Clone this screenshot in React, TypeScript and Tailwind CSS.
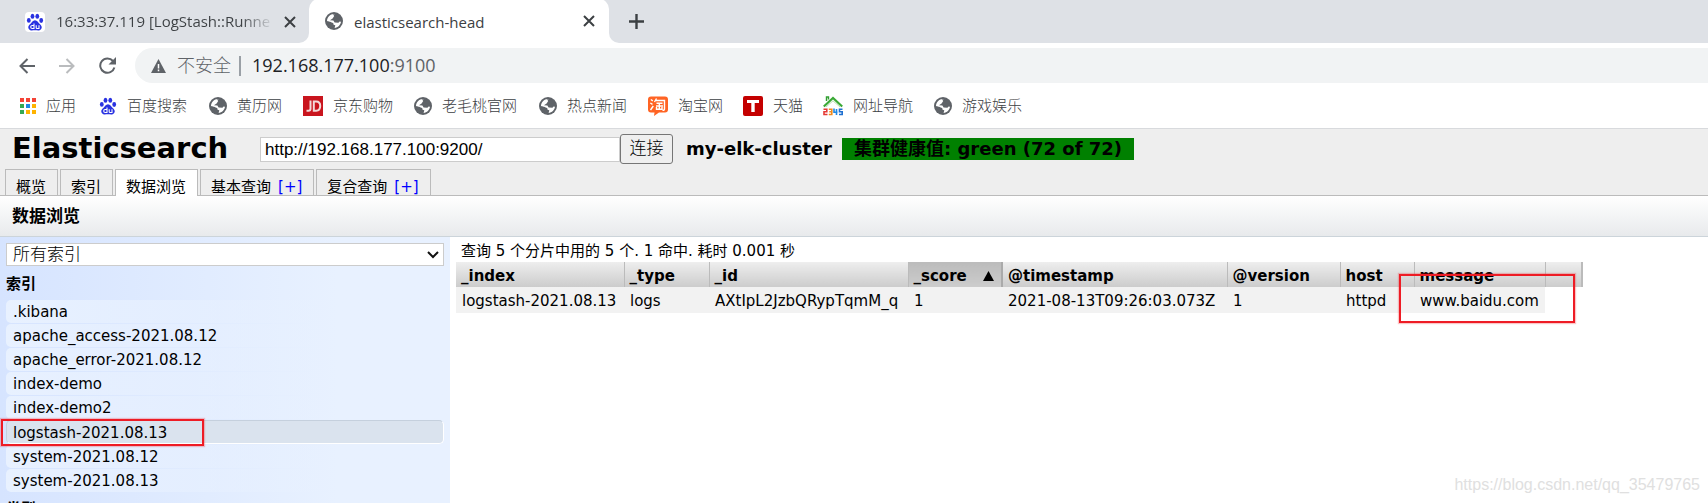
import type { ReactNode } from "react";

const UI = "font-['Open_Sans','Noto_Sans_CJK_SC',sans-serif]";
const PAGE = "font-['DejaVu_Sans','Noto_Sans_CJK_SC',sans-serif]";

function Globe() {
  return (
    <svg viewBox="0 0 18 18" className="size-[18px] shrink-0" aria-hidden="true">
      <circle cx="9" cy="9" r="9" fill="#5f6368" />
      <path
        d="M10.2 2.2 8 2.3 9.2 4 7.6 6.4 5 8.2 8.4 8.6 9.6 10.4 13.4 10.8 14.6 9.6 16 9.8C15.5 13 13 15.8 9.6 16L10.3 13.3 8.6 12.8 8.2 11 2 9.3C2 5.4 5 2 9 2Z"
        fill="#fff"
      />
      <path d="M11.2 2.4 10.4 5 11.6 6.2 13.2 6.4 15.2 6C14.4 4.3 13 3 11.2 2.4Z" fill="#5f6368" />
      <path d="M2 9.3 6 10 7 12.4 8.4 13.2 8 16C4.6 15.6 2 12.6 2 9.3Z" fill="#5f6368" />
    </svg>
  );
}

function Paw() {
  return (
    <svg viewBox="0 0 18 18" className="size-[18px] shrink-0" aria-hidden="true">
      <g fill="#2932e1">
        <ellipse cx="2.8" cy="7.4" rx="1.9" ry="2.4" />
        <ellipse cx="6.5" cy="3.2" rx="1.9" ry="2.5" />
        <ellipse cx="11.3" cy="3.3" rx="1.9" ry="2.5" />
        <ellipse cx="15.2" cy="7.5" rx="1.9" ry="2.4" />
        <path d="M9 7.2c2.3 0 3 2.3 4.7 3.7 2.2 1.8 2.6 3.7 1.3 5.4-1.5 1.900-3.7 1-6 1s-4.500.9-6-1c-1.3-1.7-.9-3.6 1.3-5.4C6 9.5 6.7 7.200 9 7.200Z" />
      </g>
      <path d="M8 10.500v5H6.200a1.300 1.300 0 0 1 0-3H8M10.200 12.300v2.400q0 .8.900.8H13v-3.200" fill="none" stroke="#fff" strokeWidth="1.1" />
    </svg>
  );
}

function Apps() {
  const colors = ["#f44336", "#f44336", "#f44336", "#34a853", "#1e88e5", "#ffb300", "#34a853", "#ffb300", "#ffb300"];
  return (
    <svg viewBox="0 0 16 16" className="size-4 shrink-0" aria-hidden="true">
      {colors.map((c, i) => (
        <rect key={i} x={(i % 3) * 6} y={Math.floor(i / 3) * 6} width="4" height="4" fill={c} />
      ))}
    </svg>
  );
}

function Jd() {
  return (
    <svg viewBox="0 0 20 20" className="size-5 shrink-0" aria-hidden="true">
      <rect width="20" height="20" fill="#c9151e" />
      <path d="M7.500 4.500v8.300q0 2-2 2H3.500M10.800 5.500h2.400q4 0 4 4.500t-4 4.700h-2.400Z" fill="none" stroke="#f3d9d9" strokeWidth="2" />
    </svg>
  );
}

function Taobao() {
  return (
    <svg viewBox="0 0 20 20" className="size-5 shrink-0" aria-hidden="true">
      <path d="M3 .5h14q3 0 3 3v10q0 3-3 3h-6l-5 3.500.5-3.500H3q-3 0-3-3v-10q0-3 3-3Z" fill="#ff6424" />
      <path
        d="m2.800 3.500 2 1.300M2.300 7l2.200 1.300M2.500 14l2.800-4M8.500 2.500 6.500 6M8 4.500h8.500v8.500q0 1.500-2 1.200M8.500 7.200h6M8 10h7M11.300 7v6M8.500 11v2.200h5.500V11"
        fill="none"
        stroke="#fff"
        strokeWidth="1.4"
      />
    </svg>
  );
}

function Tmall() {
  return (
    <svg viewBox="0 0 20 20" className="size-5 shrink-0" aria-hidden="true">
      <rect width="20" height="20" rx="2" fill="#c40000" />
      <path d="M4 4h12v3h-4.300v9H8.300V7H4Z" fill="#fff" />
    </svg>
  );
}

function Nav2345() {
  return (
    <svg viewBox="0 0 20 20" className="size-5 shrink-0" aria-hidden="true">
      <path d="M3.500 5V1h2v2.500" fill="none" stroke="#2f9e2f" strokeWidth="1.4" />
      <path d="M.8 10.500 10 2l9.200 8.500" fill="none" stroke="#3aa935" strokeWidth="2.2" />
      <path d="M3 11 10 4.800l7 6.200" fill="none" stroke="#b7e0b0" strokeWidth="1" />
      <g fill="none" strokeWidth="1.6">
        <path d="M.5 13.200h3.300v2.500H1v2.800h3.500" stroke="#e53935" />
        <path d="M5.800 13.200h3v5.300h-3M6.300 15.800h2.500" stroke="#f08a1d" />
        <path d="M11 12.500v3.700h3.500M13.500 13v6" stroke="#1e88e5" />
        <path d="M19.500 13.200h-3v2.500h2.700v2.800H16" stroke="#1e6fd0" />
      </g>
    </svg>
  );
}

function Close() {
  return (
    <svg viewBox="0 0 12 12" className="size-3" aria-hidden="true">
      <path d="m1 1 10 10M11 1 1 11" stroke="#3c4043" strokeWidth="2" />
    </svg>
  );
}

const bookmarks: { label: string; icon: ReactNode; width: string }[] = [
  { label: "应用", icon: <Apps />, width: "w-[79px]" },
  { label: "百度搜索", icon: <Paw />, width: "w-[110px]" },
  { label: "黄历网", icon: <Globe />, width: "w-[94px]" },
  { label: "京东购物", icon: <Jd />, width: "w-[111px]" },
  { label: "老毛桃官网", icon: <Globe />, width: "w-[125px]" },
  { label: "热点新闻", icon: <Globe />, width: "w-[109px]" },
  { label: "淘宝网", icon: <Taobao />, width: "w-[95px]" },
  { label: "天猫", icon: <Tmall />, width: "w-20" },
  { label: "网址导航", icon: <Nav2345 />, width: "w-[111px]" },
  { label: "游戏娱乐", icon: <Globe />, width: "w-[109px]" },
];

function Browser() {
  return (
    <header className={`${UI} border-b border-[#d8dadd] bg-white text-[#3c4043]`}>
      <div className="flex h-[43px] bg-white">
        <div className="flex w-[309px] items-center rounded-br-[10px] bg-[#dee1e6] pl-[25px]">
          <span className="flex size-5 items-center justify-center rounded-sm bg-white">
            <Paw />
          </span>
          <span className="ml-[11px] w-[218px] overflow-hidden bg-linear-to-r from-[#3c4043] from-85% to-transparent bg-clip-text text-[15px] whitespace-nowrap text-transparent">
            16:33:37.119 [LogStash::Runne
          </span>
          <button aria-label="关闭标签页" className="ml-[10px]">
            <Close />
          </button>
        </div>
        <div className="-mt-px flex w-[300px] items-center bg-[linear-gradient(#dee1e6,#dee1e6)] bg-[length:100%_12px] bg-no-repeat">
          <div className="flex h-full w-full items-center rounded-t-[10px] bg-white pl-4">
            <Globe />
            <span className="mt-0.5 ml-[11px] flex-1 text-[15px]">elasticsearch-head</span>
            <button aria-label="关闭标签页" className="mr-[14px]">
              <Close />
            </button>
          </div>
        </div>
        <div className="flex flex-1 items-center rounded-bl-[10px] bg-[#dee1e6] pl-5">
          <button aria-label="新标签页">
            <svg viewBox="0 0 15 15" className="size-[15px]" aria-hidden="true">
              <path d="M7.500 0v15M0 7.500h15" stroke="#3c4043" strokeWidth="2.4" />
            </svg>
          </button>
        </div>
      </div>
      <div className="flex items-center pt-[5px]">
        <div className="flex w-[135px] items-center gap-6 pl-[19px]">
          <button aria-label="后退">
            <svg viewBox="0 0 16 16" className="size-4" aria-hidden="true">
              <path d="M16 8H1.500M8.500 1 1.500 8l7 7" fill="none" stroke="#5f6368" strokeWidth="2" />
            </svg>
          </button>
          <button aria-label="前进">
            <svg viewBox="0 0 16 16" className="size-4" aria-hidden="true">
              <path d="M0 8h14.500M7.500 1l7 7-7 7" fill="none" stroke="#babcbe" strokeWidth="2" />
            </svg>
          </button>
          <button aria-label="重新加载">
            <svg viewBox="0 0 17 17" className="size-[17px]" aria-hidden="true">
              <path d="M14 4a7.200 7.200 0 1 0 1.400 6.500" fill="none" stroke="#5f6368" strokeWidth="2" />
              <path d="M17 0v7.500H9.500Z" fill="#5f6368" />
            </svg>
          </button>
        </div>
        <div className="flex h-[35px] flex-1 items-center rounded-l-full bg-[#f1f3f4] pl-4 text-[18px]">
          <svg viewBox="0 0 15 14" className="h-[14px] w-[15px]" aria-hidden="true">
            <path d="M7.500 0 15 14H0Z" fill="#5f6368" />
            <path d="M7.500 5v4.500M7.500 10.500v1.700" stroke="#fff" strokeWidth="1.5" />
          </svg>
          <span className="ml-[11px] font-light text-[#5f6368]">不安全</span>
          <span className="mr-[11px] ml-2 h-5 w-0.5 bg-[#9aa0a6]" />
          <span className="text-[#202124]">
            192.168.177.100<span className="text-[#5f6368]">:9100</span>
          </span>
        </div>
      </div>
      <nav className="flex h-[45px] items-center pl-5 text-[15px] font-light">
        {bookmarks.map((b) => (
          <a key={b.label} href="#" className={`${b.width} flex items-center whitespace-nowrap`}>
            {b.icon}
            <span className="ml-[10px]">{b.label}</span>
          </a>
        ))}
      </nav>
    </header>
  );
}

const tabs = [
  { label: "概览" },
  { label: "索引" },
  { label: "数据浏览", active: true },
  { label: "基本查询", add: true },
  { label: "复合查询", add: true },
];

function ClusterHeader() {
  return (
    <div className="bg-[#eee]">
      <form className="flex h-[37px] items-center" onSubmit={(e) => e.preventDefault()}>
        <h1 className="w-[260px] pl-3 text-[29px] leading-9 font-bold">Elasticsearch</h1>
        <input
          aria-label="集群地址"
          defaultValue="http://192.168.177.100:9200/"
          className="mt-1 h-[25px] w-[360px] border border-[#ccc] bg-white px-1 font-['Liberation_Sans',sans-serif] text-[17px]"
        />
        <button className="mt-0.5 h-[30px] w-[53px] rounded-[3px] border border-[#767676] bg-[#efefef] text-[17px] leading-none font-light">
          连接
        </button>
        <span className="mt-0.5 ml-[13px] w-[156px] text-[18px] font-bold">my-elk-cluster</span>
        <span className="mt-0.5 h-[22px] bg-[#008000] px-3 text-[18px] leading-[22px] font-bold whitespace-nowrap">
          集群健康值: green (72 of 72)
        </span>
      </form>
      <div className="flex h-[30px] items-end gap-0.5 border-b border-[#bbb] pt-1 pl-[5px] text-[15px] leading-4">
        {tabs.map((t) =>
          t.active ? (
            <button key={t.label} className="-mb-px h-[27px] border border-b-0 border-[#bbb] bg-white pt-2 pr-[11px] pl-[10px]">
              {t.label}
            </button>
          ) : (
            <button key={t.label} className="h-[26px] border border-b-0 border-[#bbb] pt-2 pr-[11px] pl-[10px] whitespace-nowrap">
              {t.label}
              {t.add && <span className="ml-[7px] text-[blue]">[+]</span>}
            </button>
          ),
        )}
      </div>
    </div>
  );
}

const indices = [
  ".kibana",
  "apache_access-2021.08.12",
  "apache_error-2021.08.12",
  "index-demo",
  "index-demo2",
  "logstash-2021.08.13",
  "system-2021.08.12",
  "system-2021.08.13",
];

function Sidebar() {
  return (
    <aside className="w-[450px] shrink-0 overflow-hidden bg-linear-to-r from-[#d6e4ff] to-[#e8f1ff] to-75% px-[6px] pt-[6px] text-[15px]">
      <div className="relative">
        <select
          aria-label="索引选择"
          className="h-[23px] w-full appearance-none border border-[#ccc] bg-white px-[6px] text-[17px] leading-none font-light"
        >
          <option>所有索引</option>
        </select>
        <svg viewBox="0 0 12 8" className="pointer-events-none absolute top-2 right-[5px] h-2 w-3" aria-hidden="true">
          <path d="m1 1 5 5 5-5" fill="none" stroke="#111" strokeWidth="2" />
        </svg>
      </div>
      <h2 className="mt-[6px] mb-[5px] h-[22px] leading-[22px] font-bold">索引</h2>
      <ul className="flex flex-col gap-px">
        {indices.map((name) =>
          name.startsWith("logstash") ? (
            <li
              key={name}
              className="relative h-6 rounded-[5px] border border-t-[#c5d0dd] border-r-white border-b-white border-l-[#c5d0dd] bg-[#dae3ee] px-[6px] leading-6"
            >
              {name}
              <span className="absolute -top-[2px] -left-[6px] h-[27px] w-[203px] border-2 border-[#ee1c25] shadow-[0_0_1px_1px_#ee1c2540]" />
            </li>
          ) : (
            <li key={name} className="h-[23px] rounded-[5px] bg-linear-to-r from-[#e8f1ff] to-transparent px-[7px] leading-6">
              {name}
            </li>
          ),
        )}
      </ul>
      <h2 className="mt-[6px] h-[22px] leading-[22px] font-bold">类型</h2>
    </aside>
  );
}

const columns = [
  { name: "_index", value: "logstash-2021.08.13", width: "w-[168px]" },
  { name: "_type", value: "logs", width: "w-[85px]" },
  { name: "_id", value: "AXtIpL2JzbQRypTqmM_q", width: "w-[199px]" },
  { name: "_score", value: "1", width: "w-[94px]", sorted: true },
  { name: "@timestamp", value: "2021-08-13T09:26:03.073Z", width: "w-[225px]" },
  { name: "@version", value: "1", width: "w-[113px]" },
  { name: "host", value: "httpd", width: "w-[74px]" },
  { name: "message", value: "www.baidu.com", width: "w-[131px]" },
];

function Results() {
  return (
    <main className="relative flex-1 pt-1 pl-[6px] text-[15px]">
      <p className="h-[21px] pl-[5px] leading-[21px]">查询 5 个分片中用的 5 个. 1 命中. 耗时 0.001 秒</p>
      <div className="relative w-[1127px]">
        <table className="w-full table-fixed border-collapse text-left whitespace-nowrap">
          <thead>
            <tr className="h-[25px]">
              {columns.map((c) =>
                c.sorted ? (
                  <th key={c.name} className={`${c.width} border-r-2 border-[#aaa] bg-linear-to-b from-[#bbb] to-[#ccc] px-[5px] pt-0.5 pb-0 leading-5`}>
                    <span className="flex items-center justify-between">
                      {c.name}
                      <svg viewBox="0 0 11 10" className="mr-[2px] h-[10px] w-[11px]" aria-hidden="true">
                        <path d="M5.500 0 11 10H0Z" />
                      </svg>
                    </span>
                  </th>
                ) : (
                  <th key={c.name} className={`${c.width} border-r border-[#bbb] bg-linear-to-b from-[#eee] to-[#ccc] px-[5px] pt-0.5 pb-0 leading-5`}>
                    {c.name}
                  </th>
                ),
              )}
              <th aria-label="其他" className="border-r-2 border-[#bbb] bg-linear-to-b from-[#eee] to-[#ccc]" />
            </tr>
          </thead>
          <tbody>
            <tr className="h-[26px]">
              {columns.map((c) => (
                <td key={c.name} className="bg-[#f2f2f2] px-[6px] pt-0.5 pb-0 leading-5">
                  {c.value}
                </td>
              ))}
              <td />
            </tr>
          </tbody>
        </table>
        <span className="absolute top-3 right-2 h-[49px] w-[176px] border-2 border-[#ee1c25] shadow-[0_0_1px_1px_#ee1c2540]" />
      </div>
      <p className="absolute right-2 bottom-[6px] font-['Liberation_Sans',sans-serif] text-base text-[#e0e0e0]">
        https://blog.csdn.net/qq_35479765
      </p>
    </main>
  );
}

export default function App() {
  return (
    <div className={`${PAGE} flex h-screen flex-col overflow-hidden bg-white text-black`}>
      <Browser />
      <ClusterHeader />
      <h2 className="h-[41px] border-b border-[#ccd4da] bg-linear-to-b from-white to-[#e8eaec] pl-3 text-[17px] leading-10 font-bold">
        数据浏览
      </h2>
      <div className="flex min-h-0 flex-1">
        <Sidebar />
        <Results />
      </div>
    </div>
  );
}
